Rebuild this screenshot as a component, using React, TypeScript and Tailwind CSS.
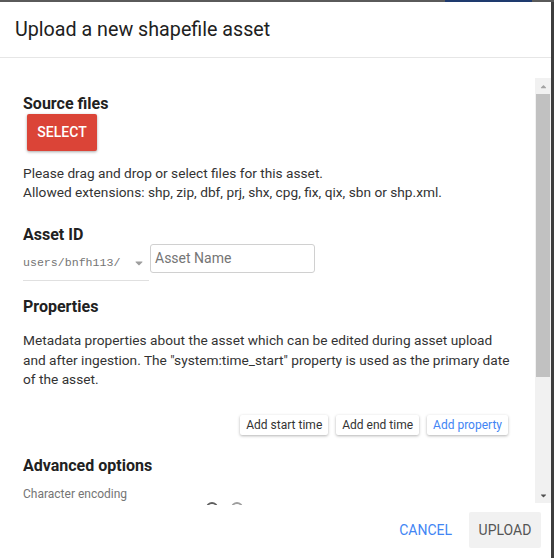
import { FaCaretDown, FaCaretUp } from "react-icons/fa";

const font = { fontFamily: "Roboto, 'Noto Sans', sans-serif" };

function Heading({ children }: { children: string }) {
  return <div className="text-[16px] font-bold text-[#212121] leading-5">{children}</div>;
}

function ChipButton({ label, blue }: { label: string; blue?: boolean }) {
  return (
    <button
      className={
        "h-[20px] px-[6px] rounded-[2px] bg-white text-[12px] leading-5 shadow-[0_1px_3px_rgba(0,0,0,0.3)] " +
        (blue ? "text-[#4285f4]" : "text-[#333]")
      }
    >
      {label}
    </button>
  );
}

export default function App() {
  return (
    <div className="w-[554px] h-[558px] bg-[#4b4b4b] flex flex-col overflow-hidden" style={font}>
      <div className="h-[2px] flex shrink-0">
        <div className="w-[445px] bg-[#5a5a5a]" />
        <div className="w-[87px] bg-[#1e3a6e]" />
        <div className="flex-1 bg-[#5a5a5a]" />
      </div>
      <div className="flex flex-1 min-h-0">
        <div className="w-[551px] bg-white flex flex-col">
          <div className="h-[56px] border-b border-[#e6e6e6] flex items-center px-[15px] shrink-0">
            <span className="text-[19.7px] text-[#212121]">Upload a new shapefile asset</span>
          </div>
          <div className="flex flex-1 min-h-0 pt-[20px]">
            <div className="flex-1 overflow-hidden pl-[23px] pt-[16px] pr-[16px]">
              <Heading>Source files</Heading>
              <button className="ml-[4px] w-[70px] h-[37px] rounded-[2px] bg-[#db4437] text-white text-[14px] font-medium shadow-[0_1px_3px_rgba(0,0,0,0.35)]">
                SELECT
              </button>
              <p className="mt-[13px] text-[13.7px] leading-[19px] text-[#333]">
                Please drag and drop or select files for this asset.
                <br />
                Allowed extensions: shp, zip, dbf, prj, shx, cpg, fix, qix, sbn or shp.xml.
              </p>
              <div className="mt-[23px]">
                <Heading>Asset ID</Heading>
              </div>
              <div className="flex items-start">
                <div className="w-[126px] h-[36px] border-b border-[#e0e0e0] flex items-center justify-between pr-[4px] pt-[1px]">
                  <span className="text-[#757575]" style={{ fontFamily: "'Liberation Mono', 'DejaVu Sans Mono', monospace", fontSize: "11.6px" }}>
                    users/bnfh113/
                  </span>
                  <FaCaretDown className="text-[#9e9e9e] text-[12px]" />
                </div>
                <div className="ml-[1px] -mt-[1px] w-[165px] h-[29px] border border-[#d0d0d0] rounded-[3px] flex items-center px-[4px] text-[14px] text-[#757575]">
                  Asset Name
                </div>
              </div>
              <div className="mt-[16px]">
                <Heading>Properties</Heading>
              </div>
              <p className="mt-[14px] max-w-[488px] text-[13.7px] leading-[19.5px] text-[#333]">
                Metadata properties about the asset which can be edited during asset upload and after ingestion. The "system:time_start" property is used as the primary date of the asset.
              </p>
              <div className="flex justify-end gap-[8px] mt-[25px] pr-[11px]">
                <ChipButton label="Add start time" />
                <ChipButton label="Add end time" />
                <ChipButton label="Add property" blue />
              </div>
              <div className="mt-[21px]">
                <Heading>Advanced options</Heading>
              </div>
              <div className="mt-[10px] text-[12px] text-[#757575] leading-4">Character encoding</div>
              <div className="flex gap-[13px] ml-[183px]">
                <div className="w-[12px] h-[12px] rounded-full border-2 border-[#5f5f5f]" />
                <div className="w-[12px] h-[12px] rounded-full border-2 border-[#9e9e9e]" />
              </div>
            </div>
            <div className="w-[16px] bg-[#f1f1f1] flex flex-col mb-[2px]">
              <div className="h-[16px] flex items-center justify-center text-[#a3a3a3] text-[9px]">
                <FaCaretUp />
              </div>
              <div className="h-[283px] mx-[1px] bg-[#c1c1c1]" />
              <div className="flex-1" />
              <div className="h-[16px] flex items-center justify-center text-[#505050] text-[9px]">
                <FaCaretDown />
              </div>
            </div>
          </div>
          <div className="h-[53px] shrink-0 flex items-start justify-end pr-[10px] pt-[7px] gap-[17px]">
            <button className="h-[36px] text-[14px] text-[#4285f4]">CANCEL</button>
            <button className="h-[36px] w-[72px] rounded-[2px] bg-[#f1f1f1] text-[14px] text-[#555]">UPLOAD</button>
          </div>
        </div>
        <div className="flex-1 bg-[#3d3d3d]" />
      </div>
    </div>
  );
}
